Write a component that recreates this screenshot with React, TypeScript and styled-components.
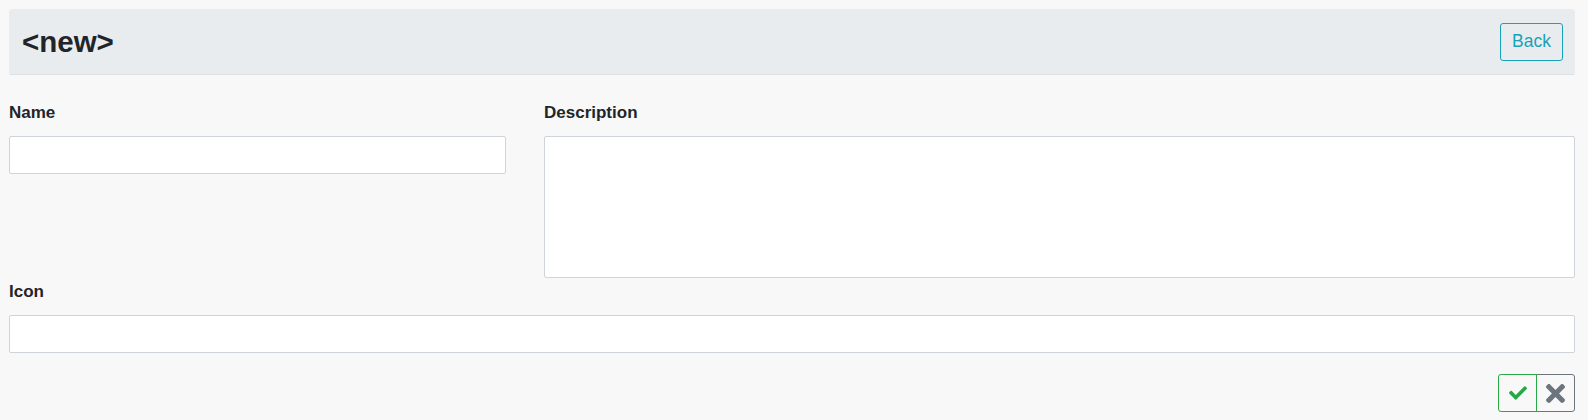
import React from "react";
import styled, { createGlobalStyle } from "styled-components";

const GlobalStyle = createGlobalStyle`
  html, body {
    margin: 0;
    padding: 0;
    background: #f8f8f8;
  }
  body {
    font-family: "Liberation Sans", Arial, Helvetica, sans-serif;
    color: #212529;
  }
  * { box-sizing: border-box; }
`;

const Page = styled.div`
  padding: 9px 13px 8px 9px;
`;

const Header = styled.div`
  height: 66px;
  display: flex;
  align-items: center;
  justify-content: space-between;
  padding: 0 12px 0 13px;
  background: #e9ecef;
  border-bottom: 1px solid #dee2e6;
  border-radius: 3px;
`;

const Title = styled.h3`
  margin: 0;
  font-size: 29.5px;
  line-height: 1.2;
  font-weight: 700;
  color: #212529;
`;

const OutlineButton = styled.button`
  height: 38px;
  padding: 0 11px;
  background: transparent;
  border: 1px solid #17a2b8;
  border-radius: 3px;
  color: #17a2b8;
  font-family: "Liberation Sans", Arial, sans-serif;
  font-size: 17.5px;
  cursor: pointer;
`;

const FormGrid = styled.div`
  display: grid;
  grid-template-columns: 497px 1fr;
  column-gap: 38px;
  margin-top: 26px;
`;

const Field = styled.div<{ $span?: boolean }>`
  display: flex;
  flex-direction: column;
  grid-column: ${(p) => (p.$span ? "1 / -1" : "auto")};
  margin-top: ${(p) => (p.$span ? "2px" : "0")};
`;

const Label = styled.label`
  font-size: 17px;
  line-height: 24px;
  font-weight: 700;
  color: #212529;
  margin-bottom: 11px;
`;

const TextInput = styled.input`
  height: 38px;
  width: 100%;
  background: #fff;
  border: 1px solid #ced4da;
  border-radius: 2px;
  padding: 6px 12px;
  font-family: inherit;
  font-size: 16px;
  outline: none;
`;

const TextArea = styled.textarea`
  height: 142px;
  width: 100%;
  background: #fff;
  border: 1px solid #ced4da;
  border-radius: 2px;
  padding: 6px 12px;
  font-family: inherit;
  font-size: 16px;
  resize: none;
  outline: none;
  display: block;
`;

const Actions = styled.div`
  display: flex;
  justify-content: flex-end;
  margin-top: 21px;
`;

const ButtonGroup = styled.div`
  display: flex;
`;

const IconButton = styled.button<{ $color: string; $first?: boolean }>`
  width: 39px;
  height: 38px;
  display: flex;
  align-items: center;
  justify-content: center;
  padding: 0;
  background: transparent;
  border: 1px solid ${(p) => p.$color};
  color: ${(p) => p.$color};
  border-radius: ${(p) => (p.$first ? "3px 0 0 3px" : "0 3px 3px 0")};
  margin-left: ${(p) => (p.$first ? "0" : "-1px")};
  position: relative;
  z-index: ${(p) => (p.$first ? 1 : 0)};
  cursor: pointer;
`;

const CheckIcon = () => (
  <svg width="18" height="14" viewBox="0 60 512 392" fill="currentColor">
    <path d="M173.898 439.404l-166.4-166.4c-9.997-9.997-9.997-26.206 0-36.204l36.203-36.204c9.997-9.998 26.207-9.998 36.204 0L192 312.69 432.095 72.596c9.997-9.997 26.207-9.997 36.204 0l36.203 36.204c9.997 9.997 9.997 26.206 0 36.204l-294.4 294.401c-9.998 9.997-26.207 9.997-36.204-.001z" />
  </svg>
);

const TimesIcon = () => (
  <svg width="19" height="19" viewBox="0 80 352 352" fill="currentColor">
    <path d="M242.72 256l100.07-100.07c12.28-12.28 12.28-32.19 0-44.48l-22.24-22.240c-12.28-12.28-32.19-12.28-44.48 0L176 189.28 75.93 89.21c-12.28-12.28-32.19-12.28-44.48 0L9.21 111.45c-12.28 12.28-12.28 32.19 0 44.48L109.28 256 9.21 356.07c-12.28 12.28-12.28 32.19 0 44.48l22.24 22.24c12.28 12.28 32.2 12.28 44.48 0L176 322.72l100.07 100.07c12.28 12.28 32.2 12.28 44.48 0l22.24-22.24c12.28-12.28 12.28-32.19 0-44.48L242.72 256z" />
  </svg>
);

export default function App() {
  return (
    <>
      <GlobalStyle />
      <Page>
        <Header>
          <Title>&lt;new&gt;</Title>
          <OutlineButton>Back</OutlineButton>
        </Header>
        <FormGrid>
          <Field>
            <Label>Name</Label>
            <TextInput type="text" />
          </Field>
          <Field>
            <Label>Description</Label>
            <TextArea />
          </Field>
          <Field $span>
            <Label>Icon</Label>
            <TextInput type="text" />
          </Field>
        </FormGrid>
        <Actions>
          <ButtonGroup>
            <IconButton $color="#28a745" $first>
              <CheckIcon />
            </IconButton>
            <IconButton $color="#6c757d">
              <TimesIcon />
            </IconButton>
          </ButtonGroup>
        </Actions>
      </Page>
    </>
  );
}
